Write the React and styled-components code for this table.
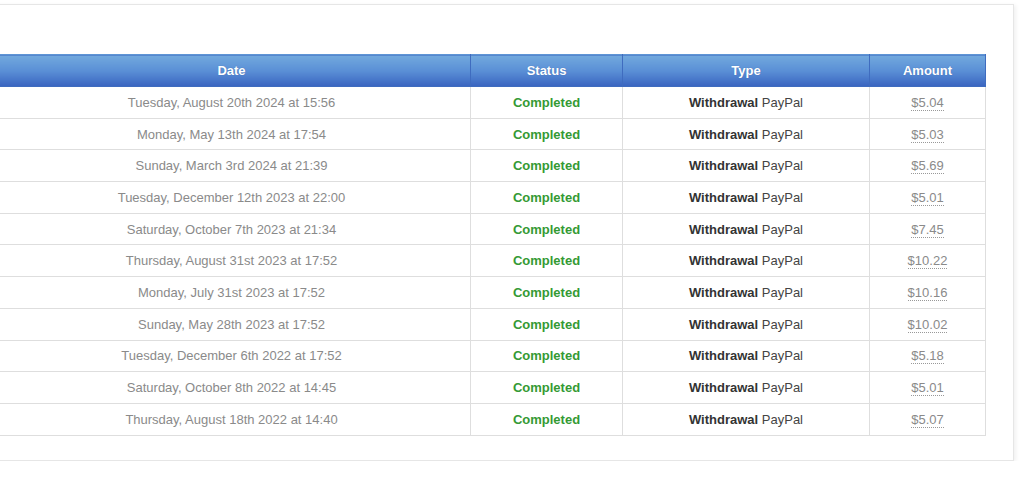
import styled, { createGlobalStyle } from "styled-components";

const GlobalStyle = createGlobalStyle`
  body {
    margin: 0;
    background: #ffffff;
    font-family: "Liberation Sans", Arial, sans-serif;
    overflow: hidden;
  }
`;

const payouts = [
  { date: "Tuesday, August 20th 2024 at 15:56", amount: "$5.04" },
  { date: "Monday, May 13th 2024 at 17:54", amount: "$5.03" },
  { date: "Sunday, March 3rd 2024 at 21:39", amount: "$5.69" },
  { date: "Tuesday, December 12th 2023 at 22:00", amount: "$5.01" },
  { date: "Saturday, October 7th 2023 at 21:34", amount: "$7.45" },
  { date: "Thursday, August 31st 2023 at 17:52", amount: "$10.22" },
  { date: "Monday, July 31st 2023 at 17:52", amount: "$10.16" },
  { date: "Sunday, May 28th 2023 at 17:52", amount: "$10.02" },
  { date: "Tuesday, December 6th 2022 at 17:52", amount: "$5.18" },
  { date: "Saturday, October 8th 2022 at 14:45", amount: "$5.01" },
  { date: "Thursday, August 18th 2022 at 14:40", amount: "$5.07" },
];

const App = () => {
  return (
    <>
      <GlobalStyle />
      <Panel>
        <Table>
          <colgroup>
            <col style={{ width: 478 }} />
            <col style={{ width: 152 }} />
            <col style={{ width: 247 }} />
            <col style={{ width: 116 }} />
          </colgroup>
          <thead>
            <tr>
              <TH>Date</TH>
              <TH>Status</TH>
              <TH>Type</TH>
              <TH>Amount</TH>
            </tr>
          </thead>
          <tbody>
            {payouts.map((p) => (
              <tr key={p.date}>
                <DateCell>{p.date}</DateCell>
                <StatusCell>Completed</StatusCell>
                <TypeCell>
                  <b>Withdrawal</b> PayPal
                </TypeCell>
                <AmountCell>
                  <Amount title="USD">{p.amount}</Amount>
                </AmountCell>
              </tr>
            ))}
          </tbody>
        </Table>
      </Panel>
    </>
  );
};
export default App;

const Panel = styled.div`
  margin: 4px 0 0 -41px;
  width: 1055px;
  box-sizing: border-box;
  padding: 49px 29px 24px 32px;
  background: #ffffff;
  border: 1px solid #e6e6e6;
  box-shadow: 2px 1px 4px rgba(0, 0, 0, 0.06);
`;

const Table = styled.table`
  width: 993px;
  table-layout: fixed;
  border-collapse: collapse;
  font-size: 13px;
`;

const TH = styled.th`
  height: 32px;
  padding: 0;
  box-sizing: border-box;
  color: #ffffff;
  font-weight: bold;
  text-align: center;
  text-shadow: 0 0 1px rgba(30, 60, 120, 0.4);
  background: linear-gradient(to bottom, #72a9de 0%, #5a8fd6 50%, #3a64c0 100%);
  border: 1px solid #3f6cbf;
  border-top-color: #5f95d4;
`;

const Cell = styled.td`
  height: 31.7px;
  padding: 0;
  box-sizing: border-box;
  text-align: center;
  border: 1px solid #dedede;
`;

const DateCell = styled(Cell)`
  color: #8a8a8a;
`;

const StatusCell = styled(Cell)`
  color: #349a34;
  font-weight: bold;
`;

const TypeCell = styled(Cell)`
  color: #444444;
  b {
    color: #333333;
  }
`;

const AmountCell = styled(Cell)`
  color: #8a8a8a;
`;

const Amount = styled.span`
  border-bottom: 1px dotted #999999;
`;
